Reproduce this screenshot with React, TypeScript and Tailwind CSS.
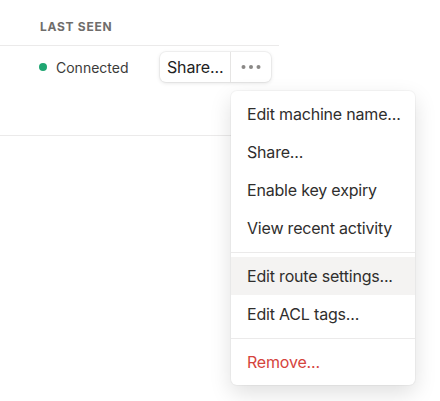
const MENU_GROUPS: { label: string; danger?: boolean; active?: boolean }[][] = [
  [
    { label: "Edit machine name..." },
    { label: "Share..." },
    { label: "Enable key expiry" },
    { label: "View recent activity" },
  ],
  [{ label: "Edit route settings...", active: true }, { label: "Edit ACL tags..." }],
  [{ label: "Remove...", danger: true }],
];

function Dots() {
  return (
    <svg width="20" height="6" viewBox="0 0 20 6" fill="#8a8886">
      <circle cx="2.5" cy="3" r="2" />
      <circle cx="10" cy="3" r="2" />
      <circle cx="17.5" cy="3" r="2" />
    </svg>
  );
}

export default function App() {
  return (
    <div
      className="relative w-[440px] h-[401px] overflow-hidden bg-white text-[#2f2e2d]"
      style={{ fontFamily: "Inter, 'Noto Sans', sans-serif" }}
    >
      <div className="w-[279px]">
        <div className="h-[46px] border-b border-[#ebeaea] pl-[40px] pt-[20px]">
          <span className="block text-[12px] leading-[14px] font-bold tracking-[0.06em] uppercase text-[#6f6d6b]">
            Last seen
          </span>
        </div>
        <div className="h-[90px] border-b border-[#ebeaea] flex items-start pt-[6px]">
          <div className="flex items-center gap-[9px] pl-[39px] h-[30px] w-[160px]">
            <span className="w-[8px] h-[8px] rounded-full bg-[#1fa672]" />
            <span className="text-[14px] text-[#3c3b3a]">Connected</span>
          </div>
          <div className="flex h-[30px] rounded-[6px] bg-white shadow-[0_0_0_1px_rgba(0,0,0,0.04),0_1px_4px_rgba(0,0,0,0.12)]">
            <button className="px-[7px] text-[16px] leading-none tracking-[-0.01em] text-[#222] border-r border-[#e6e5e4]">
              Share...
            </button>
            <button className="w-[40px] flex items-center justify-center">
              <Dots />
            </button>
          </div>
        </div>
      </div>

      <div className="absolute left-[231px] top-[91px] w-[184px] rounded-[6px] bg-white py-[4px] shadow-[0_0_0_1px_rgba(0,0,0,0.03),0_8px_22px_rgba(0,0,0,0.13)]">
        {MENU_GROUPS.map((group, gi) => (
          <div key={gi}>
            {gi > 0 && <div className="my-[4.5px] h-px bg-[#ebeaea]" />}
            {group.map((item) => (
              <div
                key={item.label}
                className={`h-[38px] flex items-center px-[16px] text-[16px] tracking-[-0.012em] whitespace-nowrap ${
                  item.active ? "bg-[#f4f3f2]" : ""
                } ${item.danger ? "text-[#d5443d]" : "text-[#2f2e2d]"}`}
              >
                {item.label}
              </div>
            ))}
          </div>
        ))}
      </div>
    </div>
  );
}
